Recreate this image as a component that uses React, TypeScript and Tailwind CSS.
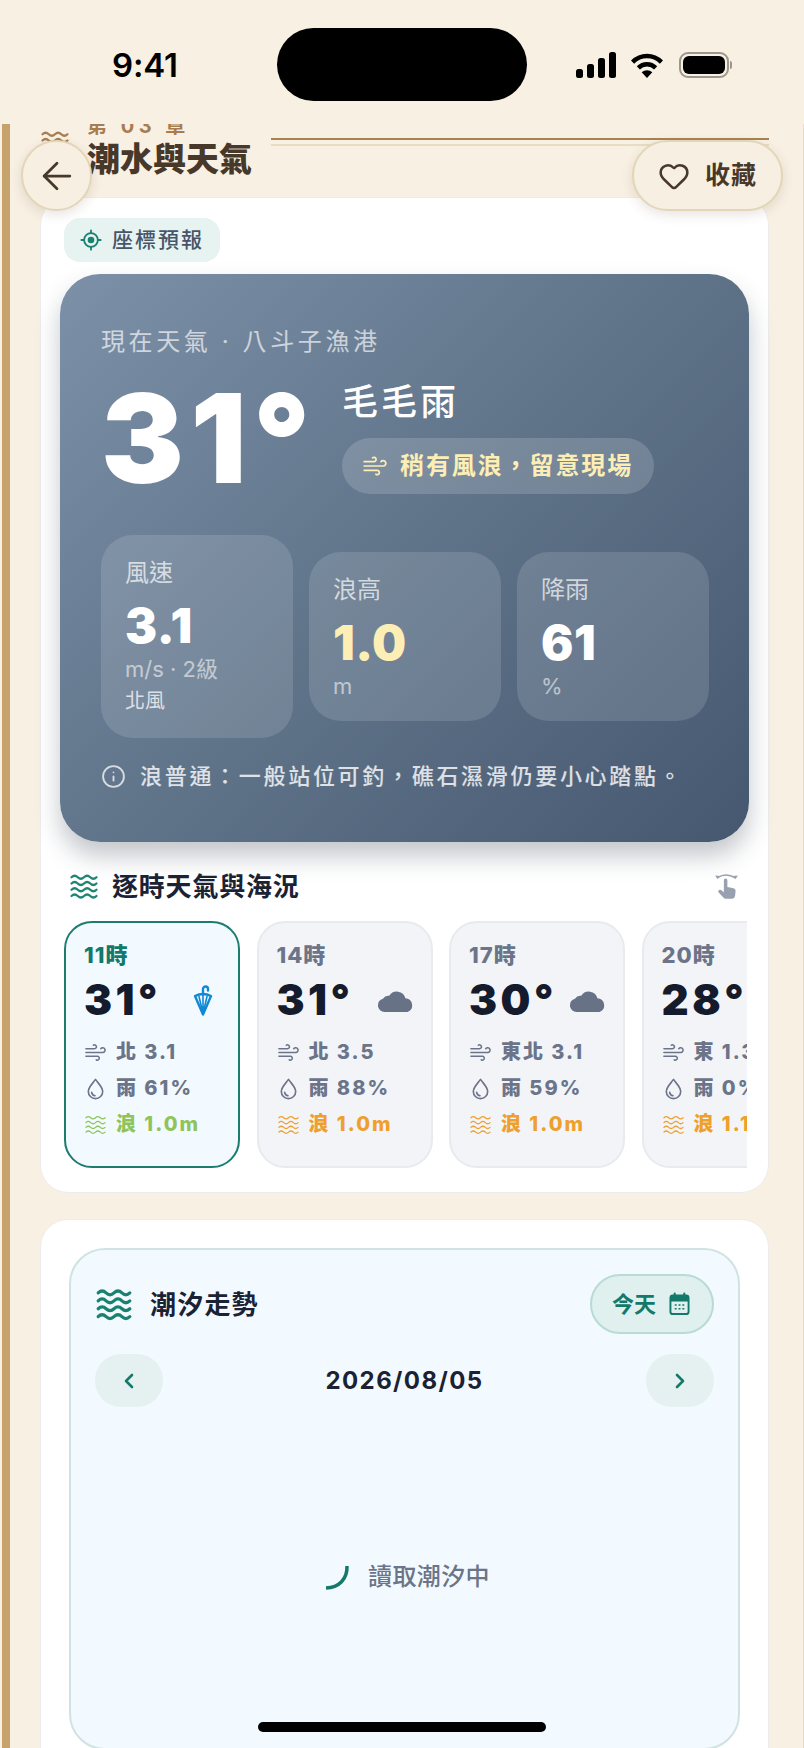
import { ArrowLeft, ChevronLeft, ChevronRight, Heart, Info, Wind } from "lucide-react"

type IconProps = { className?: string }

function WaveIcon({ className, lines = 4, width = 1.6 }: IconProps & { lines?: number; width?: number }) {
  const ys = lines === 4 ? [5, 10, 15, 20] : [6, 12, 18]
  return (
    <svg viewBox="0 0 24 24" fill="none" stroke="currentColor" strokeWidth={width} strokeLinecap="round" className={className}>
      {ys.map((y) => (
        <path key={y} d={`M2 ${y} q2.5 -2.4 5 0 t5 0 t5 0 t5 0`} />
      ))}
    </svg>
  )
}

function DropIcon({ className }: IconProps) {
  return (
    <svg viewBox="0 0 24 24" fill="none" stroke="currentColor" strokeWidth="1.7" strokeLinecap="round" strokeLinejoin="round" className={className}>
      <path d="M12 2.5 C15 7 19.5 10.5 19.5 15 A7.5 7.5 0 0 1 4.5 15 C4.5 10.5 9 7 12 2.5 Z" />
      <path d="M8 16 a4 4 0 0 0 3.5 3.5" />
    </svg>
  )
}

function CloudIcon({ className }: IconProps) {
  return (
    <svg viewBox="0 0 36 24" fill="currentColor" className={className}>
      <path d="M7 23 A6.5 6.5 0 0 1 5.5 10.2 A6 6 0 0 1 11.5 7.5 A8.5 8.5 0 0 1 27 9.8 A6.8 6.8 0 0 1 29 23 Z" />
    </svg>
  )
}

function UmbrellaIcon({ className }: IconProps) {
  return (
    <svg viewBox="0 0 24 32" fill="none" stroke="currentColor" strokeWidth="2.4" strokeLinecap="round" strokeLinejoin="round" className={className}>
      <path d="M12 10 V4.5 a2.5 2.5 0 0 1 5 0 V6" />
      <path d="M4 11.5 Q12 7.5 20 11.5 L12 30 Z" />
      <path d="M12 10 V29 M8 12 L12 29 M16 12 L12 29" strokeWidth="1.6" />
    </svg>
  )
}

function SwipeIcon({ className }: IconProps) {
  return (
    <svg viewBox="0 0 30 32" fill="none" className={className}>
      <path d="M5 6.5 Q14 0.5 25 6.5" stroke="currentColor" strokeWidth="1.8" strokeLinecap="round" />
      <path d="M2 4 L4.5 8 L8 4.5 Z M28 4 L25.5 8 L22 4.5 Z" fill="currentColor" />
      <path d="M12 9.5 a2 2 0 0 1 4 0 V17 l7 1.6 a3 3 0 0 1 2.4 3.2 l-.6 5.2 a4 4 0 0 1 -4 3.5 H14 a3 3 0 0 1 -2.3 -1 L6 23.5 a2 2 0 0 1 2.8 -2.8 L12 23 Z" fill="currentColor" />
    </svg>
  )
}

function LocateIcon({ className }: IconProps) {
  return (
    <svg viewBox="0 0 24 24" fill="none" stroke="currentColor" strokeWidth="2" strokeLinecap="round" className={className}>
      <circle cx="12" cy="12" r="7.5" />
      <circle cx="12" cy="12" r="3.6" fill="currentColor" stroke="none" />
      <path d="M12 1.5 V4.5 M12 19.5 V22.5 M1.5 12 H4.5 M19.5 12 H22.5" />
    </svg>
  )
}

function CalendarIcon({ className }: IconProps) {
  return (
    <svg viewBox="0 0 22 24" className={className}>
      <rect x="1.5" y="3" width="19" height="19.5" rx="2.5" fill="none" stroke="currentColor" strokeWidth="2" />
      <path d="M1.5 5 a2 2 0 0 1 2 -2 h15 a2 2 0 0 1 2 2 v4.5 h-19 Z" fill="currentColor" />
      <path d="M6 1 V4 M16 1 V4" stroke="currentColor" strokeWidth="2.2" strokeLinecap="round" />
      <path d="M6 13 h2 M10 13 h2 M14 13 h2 M6 17 h2 M10 17 h2 M14 17 h2" stroke="currentColor" strokeWidth="1.6" />
    </svg>
  )
}

function StatusBar() {
  return (
    <div className="flex h-[124px] shrink-0 items-start pl-[112px] pt-[28px]">
      <div className="mt-[20px] w-[68px] text-[33px] font-semibold leading-[34px] tracking-[-0.2px] text-black">9:41</div>
      <div className="ml-[97px] h-[73px] w-[250px] rounded-full bg-black" />
      <div className="ml-[49px] mt-[24px] flex items-center gap-[14px]">
        <svg viewBox="0 0 40 26" className="h-[26px] w-[40px]">
          <rect x="0" y="17" width="7" height="9" rx="2.5" />
          <rect x="11" y="12" width="7" height="14" rx="2.5" />
          <rect x="22" y="6" width="7" height="20" rx="2.5" />
          <rect x="33" y="0" width="7" height="26" rx="2.5" />
        </svg>
        <svg viewBox="0 0 34 26" className="h-[25px] w-[34px]" fill="none" stroke="black" strokeLinecap="butt">
          <path d="M2 9.5 C10.5 1 23.5 1 32 9.5" strokeWidth="4.6" />
          <path d="M8 15.5 C13 10.5 21 10.5 26 15.5" strokeWidth="4.6" />
          <path d="M17 26 L11.5 20 C14.5 17.2 19.5 17.2 22.5 20 Z" fill="black" stroke="none" />
        </svg>
        <div className="ml-[1px] flex items-center">
          <div className="flex h-[26px] w-[50px] items-center justify-center rounded-[9px] border-2 border-[#9c978c] p-[2px]">
            <div className="h-full w-full rounded-[6px] bg-black" />
          </div>
          <div className="ml-[1px] h-[8px] w-[2px] rounded-r-sm bg-[#9c978c]" />
        </div>
      </div>
    </div>
  )
}

function Stat({ label, value, lines, valueClass }: { label: string; value: string; lines: string[]; valueClass?: string }) {
  return (
    <div className="rounded-[32px] bg-white/[0.13] pb-[20px] pl-[24px] pr-[20px] pt-[22px]">
      <div className="text-[24px] leading-[32px] text-white/70">{label}</div>
      <div className={`mt-[9px] text-[48px] font-black leading-[56px] tracking-[0.5px] ${valueClass ?? "text-white"}`}>{value}</div>
      {lines.map((line, i) => (
        <div key={line} className={i === 0 ? "text-[22px] leading-[30px] text-white/55" : "text-[20px] leading-[34px] text-white/75"}>
          {line}
        </div>
      ))}
    </div>
  )
}

function Hero() {
  return (
    <div className="mt-[12px] h-[568px] rounded-[40px] bg-[linear-gradient(135deg,#7c90a8_0%,#5f7389_50%,#465870_100%)] pl-[41px] pr-[40px] pt-[50px] shadow-[0_14px_24px_rgba(40,50,70,0.28)]">
      <div className="text-[24px] leading-[36px] tracking-[3.6px] text-white/65">現在天氣 · 八斗子漁港</div>
      <div className="mt-[10px] flex items-start">
        <div className="mt-[2px] w-[241px] text-[124px] font-black leading-[132px] tracking-[6.5px] text-white">31°</div>
        <div className="mt-[8px]">
          <div className="text-[36px] font-medium leading-[48px] tracking-[3px] text-white">毛毛雨</div>
          <div className="mt-[12px] flex h-[56px] w-[312px] items-center rounded-full bg-white/[0.16] pl-[20px]">
            <Wind className="h-[26px] w-[26px] text-[#fdeeb5]" strokeWidth={1.6} />
            <span className="ml-[12px] whitespace-nowrap text-[24px] font-bold tracking-[1.9px] text-[#fdeeb5]">{"稍有風浪\uFF0C留意現場"}</span>
          </div>
        </div>
      </div>
      <div className="mt-[31px] grid grid-cols-3 items-center gap-[16px]">
        <Stat label="風速" value="3.1" lines={["m/s · 2級", "北風"]} />
        <Stat label="浪高" value="1.0" lines={["m"]} valueClass="text-[#fdeeb5]" />
        <Stat label="降雨" value="61" lines={["%"]} />
      </div>
      <div className="mt-[22px] flex items-center">
        <Info className="h-[25px] w-[25px] text-white/75" strokeWidth={1.8} />
        <span className="ml-[14px] whitespace-nowrap text-[22px] font-medium tracking-[2.7px] text-white/80">{"浪普通\uFF1A一般站位可釣\uFF0C礁石濕滑仍要小心踏點。"}</span>
      </div>
    </div>
  )
}

type Hour = {
  time: string
  temp: string
  wind: string
  rain: string
  wave: string
  active?: boolean
}

const hours: Hour[] = [
  { time: "11時", temp: "31°", wind: "北 3.1", rain: "雨 61%", wave: "浪 1.0m", active: true },
  { time: "14時", temp: "31°", wind: "北 3.5", rain: "雨 88%", wave: "浪 1.0m" },
  { time: "17時", temp: "30°", wind: "東北 3.1", rain: "雨 59%", wave: "浪 1.0m" },
  { time: "20時", temp: "28°", wind: "東 1.3", rain: "雨 0%", wave: "浪 1.1m" },
]

function HourCard({ h }: { h: Hour }) {
  return (
    <div
      className={`h-[247px] w-[176px] shrink-0 overflow-hidden rounded-[28px] pl-[18px] pt-[18px] ${
        h.active ? "border-[2.5px] border-[#1c7d6f] bg-[#f3faff]" : "border-2 border-[#e8eaee] bg-[#f2f4f8]"
      }`}
    >
      <div className={`text-[22px] font-extrabold leading-[28px] tracking-[1px] ${h.active ? "text-[#14796a]" : "text-[#6b7488]"}`}>{h.time}</div>
      <div className="mt-[6px] flex h-[50px] items-center justify-between pr-[16px]">
        <span className="text-[42px] font-black leading-[50px] tracking-[3.5px] text-[#141b2d]">{h.temp}</span>
        {h.active ? <UmbrellaIcon className="mr-[7px] h-[33px] w-[24px] text-[#1188d6]" /> : <CloudIcon className="h-[25px] w-[38px] text-[#687287]" />}
      </div>
      <div className="mt-[13px] flex flex-col gap-[8px] whitespace-nowrap text-[20px] font-extrabold leading-[28px] tracking-[2px] text-[#6b7488]">
        <div className="flex items-center gap-[9px]">
          <Wind className="h-[23px] w-[23px] shrink-0" strokeWidth={1.6} />
          <span>{h.wind}</span>
        </div>
        <div className="flex items-center gap-[9px]">
          <DropIcon className="h-[23px] w-[23px] shrink-0" />
          <span>{h.rain}</span>
        </div>
        <div className={`flex items-center gap-[9px] ${h.active ? "text-[#8fc45a]" : "text-[#eea02f]"}`}>
          <WaveIcon className="h-[23px] w-[23px] shrink-0" width={1.3} />
          <span>{h.wave}</span>
        </div>
      </div>
    </div>
  )
}

function WeatherCard() {
  return (
    <section className="ml-[30px] mr-[34px] mt-[-2px] h-[996px] rounded-[28px] border border-[#ececec] bg-white px-[19px] pt-[20px]">
      <div className="ml-[4px] flex h-[44px] w-[156px] items-center rounded-[16px] bg-[#e6f3f1] pl-[16px]">
        <LocateIcon className="h-[22px] w-[22px] text-[#1a8070]" />
        <span className="ml-[10px] whitespace-nowrap text-[21px] font-medium tracking-[2px] text-[#475569]">座標預報</span>
      </div>
      <Hero />
      <div className="mt-[24px] flex h-[40px] items-center justify-between pl-[9px] pr-[9px]">
        <div className="flex items-center">
          <WaveIcon className="h-[30px] w-[30px] text-[#1f8573]" width={1.8} />
          <span className="ml-[13px] text-[26px] font-bold tracking-[0.8px] text-[#1a2233]">逐時天氣與海況</span>
        </div>
        <SwipeIcon className="h-[28px] w-[27px] text-[#98a1b0]" />
      </div>
      <div className="ml-[4px] mt-[15px] flex w-[683px] gap-[16.5px] overflow-hidden">
        {hours.map((h) => (
          <HourCard key={h.time} h={h} />
        ))}
      </div>
    </section>
  )
}

function TideCard() {
  return (
    <section className="ml-[30px] mr-[34px] mt-[26px] h-[560px] rounded-[28px] border border-[#ececec] bg-white px-[28px] pt-[28px]">
      <div className="h-[502px] rounded-[36px] border-2 border-[#cfe3e3] bg-[#f3faff] px-[24px] pt-[24px]">
        <div className="flex items-center justify-between">
          <div className="flex items-center">
            <WaveIcon className="h-[38px] w-[38px] text-[#1a8070]" width={2} />
            <span className="ml-[17px] text-[26px] font-bold tracking-[1.2px] text-[#1a2233]">潮汐走勢</span>
          </div>
          <button className="flex h-[60px] w-[124px] items-center justify-center gap-[13px] rounded-full border-2 border-[#b9dbd5] bg-[#dff0ee] pr-[2px]">
            <span className="text-[22px] font-bold text-[#14796a]">今天</span>
            <CalendarIcon className="h-[24px] w-[21px] text-[#14796a]" />
          </button>
        </div>
        <div className="mt-[20px] flex items-center justify-between">
          <button className="flex h-[53px] w-[68px] items-center justify-center rounded-[26px] bg-[#e5f1f0]">
            <ChevronLeft className="h-[24px] w-[24px] text-[#14796a]" strokeWidth={2.6} />
          </button>
          <span className="text-[24px] font-bold tracking-[1.4px] text-[#1a2233]">2026/08/05</span>
          <button className="flex h-[53px] w-[68px] items-center justify-center rounded-[26px] bg-[#e5f1f0]">
            <ChevronRight className="h-[24px] w-[24px] text-[#14796a]" strokeWidth={2.6} />
          </button>
        </div>
        <div className="mt-[152px] flex items-center justify-center gap-[18px] pl-[3px]">
          <svg viewBox="0 0 28 28" className="h-[28px] w-[28px]" fill="none" stroke="#14796a" strokeWidth="3.5" strokeLinecap="butt">
            <path d="M25 3 C25.5 16 17 24.5 4 25" />
          </svg>
          <span className="text-[24px] font-medium tracking-[0.4px] text-[#6b7488]">讀取潮汐中</span>
        </div>
      </div>
    </section>
  )
}

export default function App() {
  return (
    <div className="relative h-[1748px] w-[804px] overflow-hidden bg-[#f8f0e3] [font-family:Inter,'Noto_Sans_CJK_TC',sans-serif]">
      <StatusBar />

      {/* scrolled page: the chapter header runs under the status bar */}
      <div className="ml-[2px] h-[1624px] overflow-hidden border-l-[8px] border-r border-l-[#c6a36d] border-r-[#e8dcc2]">
        <div className="relative mt-[-10px] flex h-[85px] pl-[30px]">
          <WaveIcon className="mt-[6px] h-[46px] w-[30px] shrink-0 text-[#a87f52]" width={1.8} />
          <div className="ml-[17px] w-[185px] shrink-0">
            <div className="text-[20px] font-bold leading-[24px] tracking-[4.5px] text-[#a87c4f]">第 03 章</div>
            <div className="mt-[-1px] whitespace-nowrap text-[33px] font-extrabold leading-[44px] text-[#47382a]">潮水與天氣</div>
          </div>
          <div className="ml-[-1px] mt-[24px] h-[8px] w-[498px] border-y-2 border-t-[#a7834f] border-b-[#e8dcc2]" />
        </div>
        <WeatherCard />
        <TideCard />
      </div>

      {/* floating buttons */}
      <button className="absolute left-[21px] top-[140px] flex h-[71px] w-[71px] items-center justify-center rounded-full border-2 border-[#e3d6b8] bg-[#f6efe2] shadow-[0_4px_12px_rgba(90,70,40,0.14)]">
        <ArrowLeft className="h-[44px] w-[44px] text-[#47382a]" strokeWidth={1.5} />
      </button>
      <button className="absolute left-[632px] top-[140px] flex h-[71px] w-[151px] items-center justify-center gap-[15px] rounded-full border-2 border-[#e3d6b8] bg-[#f6efe2] shadow-[0_4px_12px_rgba(90,70,40,0.14)]">
        <Heart className="h-[32px] w-[32px] text-[#47382a]" strokeWidth={1.9} />
        <span className="text-[25px] font-bold tracking-[1px] text-[#47382a]">收藏</span>
      </button>

      <div className="absolute left-[258px] top-[1722px] h-[10px] w-[288px] rounded-full bg-black" />
    </div>
  )
}
